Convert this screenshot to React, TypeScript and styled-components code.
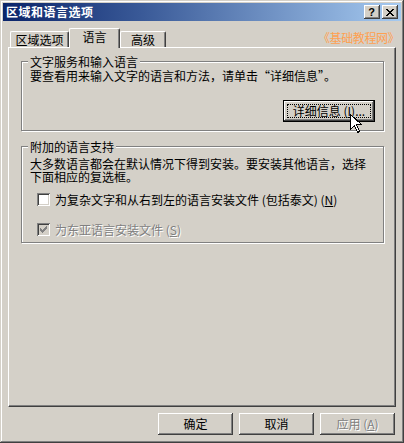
import React from "react";
import styled, { createGlobalStyle, css } from "styled-components";

const FONT = `"Noto Sans CJK SC", "Liberation Sans", sans-serif`;

const Global = createGlobalStyle`
  html, body { margin: 0; padding: 0; background: #d4d0c8; }
  * { box-sizing: border-box; }
`;

const Window = styled.div`
  position: relative;
  width: 404px;
  height: 443px;
  padding: 3px;
  background: #d4d0c8;
  box-shadow: inset -1px -1px #404040, inset 1px 1px #d4d0c8,
    inset -2px -2px #808080, inset 2px 2px #fff;
  display: flex;
  flex-direction: column;
  font-family: ${FONT};
  font-size: 12px;
  color: #000;
  overflow: hidden;
`;

const TitleBar = styled.div`
  height: 18px;
  display: flex;
  align-items: center;
  padding: 0 3px 0 3px;
  background: linear-gradient(to right, #0a246a 0%, #3a5a98 35%, #a6caf0 100%);
`;

const Title = styled.span`
  color: #fff;
  font-weight: bold;
  font-size: 12px;
  letter-spacing: 0.5px;
  line-height: 18px;
`;

const TitleButtons = styled.div`
  margin-left: auto;
  display: flex;
  gap: 2px;
`;

const raised = css`
  background: #d4d0c8;
  box-shadow: inset -1px -1px #404040, inset 1px 1px #fff,
    inset -2px -2px #808080, inset 2px 2px #d4d0c8;
`;

const CaptionButton = styled.div`
  ${raised};
  width: 16px;
  height: 14px;
  display: flex;
  align-items: center;
  justify-content: center;
  font-family: "Liberation Sans", sans-serif;
  font-weight: bold;
  font-size: 11px;
  line-height: 14px;
  padding-right: 1px;
`;

const Body = styled.div`
  flex: 1;
  display: flex;
  flex-direction: column;
  padding: 7px 5px 0 5px;
`;

const TabStrip = styled.div`
  height: 19px;
  display: flex;
  align-items: flex-end;
  padding-left: 2px;
  position: relative;
  z-index: 1;
`;

const Tab = styled.div<{ $active?: boolean; $w: number }>`
  width: ${(p) => p.$w}px;
  height: ${(p) => (p.$active ? 20 : 16)}px;
  margin-bottom: ${(p) => (p.$active ? -1 : 0)}px;
  padding-top: 1px;
  text-align: center;
  line-height: 14px;
  background: #d4d0c8;
  border-top: 1px solid #fff;
  border-left: 1px solid #fff;
  border-right: 1px solid #404040;
  border-radius: 2px 2px 0 0;
  box-shadow: inset -1px 0 #808080;
  position: relative;
  z-index: ${(p) => (p.$active ? 2 : 1)};
`;

const Panel = styled.div`
  height: 360px;
  border-top: 1px solid #fff;
  border-left: 1px solid #fff;
  border-right: 1px solid #404040;
  border-bottom: 1px solid #404040;
  box-shadow: inset -1px -1px #808080;
  padding: 7px 11px 0 12px;
  display: flex;
  flex-direction: column;
`;

const Group = styled.fieldset<{ $gap?: number; $pb: number }>`
  margin: ${(p) => p.$gap ?? 0}px 0 0 0;
  min-width: 0;
  border: 1px solid #808080;
  box-shadow: 1px 1px 0 #fff, inset 1px 1px 0 #fff;
  padding: 1px 8px ${(p) => p.$pb}px 8px;
`;

const Legend = styled.legend`
  padding: 0 2px;
  margin-left: -2px;
  line-height: 13px;
  background: #d4d0c8;
`;

const Text = styled.p<{ $lh: number; $mt?: number }>`
  margin: ${(p) => p.$mt ?? 0}px 0 0 0;
  line-height: ${(p) => p.$lh}px;
  white-space: nowrap;
`;

const ButtonRow = styled.div<{ $mt: number; $pr?: number }>`
  display: flex;
  justify-content: flex-end;
  gap: 6px;
  margin-top: ${(p) => p.$mt}px;
  padding-right: ${(p) => p.$pr ?? 0}px;
`;

const PushButton = styled.div<{ $w: number; $h: number; $disabled?: boolean }>`
  ${raised};
  width: ${(p) => p.$w}px;
  height: ${(p) => p.$h}px;
  display: flex;
  align-items: center;
  justify-content: center;
  line-height: 14px;
  ${(p) =>
    p.$disabled &&
    css`
      color: #808080;
      text-shadow: 1px 1px 0 #fff;
    `}
`;

const DefaultButton = styled.div`
  width: 92px;
  height: 22px;
  border: 1px solid #000;
  background: #d4d0c8;
  box-shadow: inset -1px -1px #404040, inset 1px 1px #fff,
    inset -2px -2px #808080, inset 2px 2px #d4d0c8;
  padding: 3px;
  display: flex;
`;

const FocusRing = styled.span`
  flex: 1;
  border: 1px dotted #000;
  display: flex;
  align-items: center;
  justify-content: center;
  line-height: 12px;
`;

const CheckRow = styled.div<{ $mt: number; $disabled?: boolean }>`
  display: flex;
  align-items: center;
  height: 13px;
  margin-top: ${(p) => p.$mt}px;
  padding-left: 7px;
  ${(p) =>
    p.$disabled &&
    css`
      color: #808080;
      text-shadow: 1px 1px 0 #fff;
    `}
`;

const CheckBox = styled.span<{ $disabled?: boolean }>`
  width: 13px;
  height: 13px;
  flex: none;
  background: ${(p) => (p.$disabled ? "#d4d0c8" : "#fff")};
  box-shadow: inset 1px 1px #808080, inset -1px -1px #fff,
    inset 2px 2px #404040, inset -2px -2px #d4d0c8;
  display: flex;
  align-items: center;
  justify-content: center;
`;

const CheckLabel = styled.span`
  margin-left: 5px;
  line-height: 13px;
  white-space: nowrap;
`;

const Key = styled.u`
  text-decoration-thickness: 1px;
  text-underline-offset: 1px;
`;

const Watermark = styled.div`
  position: absolute;
  left: 318px;
  top: 31px;
  color: #ffa050;
  font-size: 12px;
  letter-spacing: -0.4px;
  line-height: 14px;
  white-space: nowrap;
`;

const Cursor = styled.svg`
  position: absolute;
  left: 350px;
  top: 114px;
`;

export default function App() {
  return (
    <>
      <Global />
      <Window>
        <TitleBar>
          <Title>区域和语言选项</Title>
          <TitleButtons>
            <CaptionButton>?</CaptionButton>
            <CaptionButton>
              <svg width="8" height="7" viewBox="0 0 8 7" shapeRendering="crispEdges">
                <path
                  d="M0 0h2v1H0zM6 0h2v1H6zM1 1h2v1H1zM5 1h2v1H5zM2 2h4v1H2zM3 3h2v1H3zM2 4h4v1H2zM1 5h2v1H1zM5 5h2v1H5zM0 6h2v1H0zM6 6h2v1H6z"
                  fill="#000"
                />
              </svg>
            </CaptionButton>
          </TitleButtons>
        </TitleBar>
        <Body>
          <TabStrip>
            <Tab $w={59}>区域选项</Tab>
            <Tab $w={51} $active>
              语言
            </Tab>
            <Tab $w={46}>高级</Tab>
          </TabStrip>
          <Panel>
            <Group $pb={8}>
              <Legend>文字服务和输入语言</Legend>
              <Text $lh={14}>要查看用来输入文字的语言和方法，请单击“详细信息”。</Text>
              <ButtonRow $mt={17}>
                <DefaultButton>
                  <FocusRing>
                    详细信息 (<Key>I</Key>)...
                  </FocusRing>
                </DefaultButton>
              </ButtonRow>
            </Group>
            <Group $gap={9} $pb={6}>
              <Legend>附加的语言支持</Legend>
              <Text $lh={13} $mt={3}>
                大多数语言都会在默认情况下得到安装。要安装其他语言，选择
                <br />
                下面相应的复选框。
              </Text>
              <CheckRow $mt={10}>
                <CheckBox />
                <CheckLabel>
                  为复杂文字和从右到左的语言安装文件 (包括泰文) (<Key>N</Key>)
                </CheckLabel>
              </CheckRow>
              <CheckRow $mt={17} $disabled>
                <CheckBox $disabled>
                  <svg width="7" height="7" viewBox="0 0 7 7" shapeRendering="crispEdges">
                    <path
                      d="M6 0h1v3H6zM5 1h1v3H5zM4 2h1v3H4zM3 3h1v3H3zM2 4h1v3H2zM1 3h1v3H1zM0 2h1v3H0z"
                      fill="#808080"
                    />
                  </svg>
                </CheckBox>
                <CheckLabel>
                  为东亚语言安装文件 (<Key>S</Key>)
                </CheckLabel>
              </CheckRow>
            </Group>
          </Panel>
          <ButtonRow $mt={6} $pr={1}>
            <PushButton $w={75} $h={22}>确定</PushButton>
            <PushButton $w={75} $h={22}>取消</PushButton>
            <PushButton $w={75} $h={22} $disabled>
              应用 (<Key>A</Key>)
            </PushButton>
          </ButtonRow>
        </Body>
        <Watermark>《基础教程网》</Watermark>
        <Cursor width="13" height="20" viewBox="0 0 13 20" shapeRendering="crispEdges">
          <path
            d="M0.5 0.5 L0.5 15.5 L4.5 11.5 L7.5 18.5 L9.5 17.5 L6.5 10.5 L11.5 10.5 Z"
            fill="#fff"
            stroke="#000"
            strokeWidth="1"
          />
        </Cursor>
      </Window>
    </>
  );
}
